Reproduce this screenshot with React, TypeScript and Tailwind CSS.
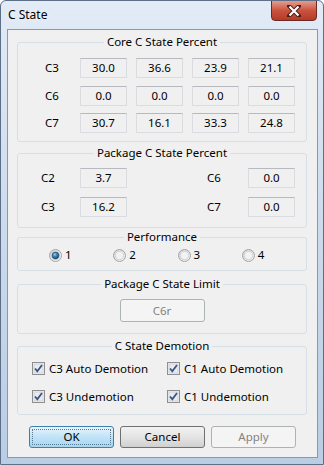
import type { ReactNode } from 'react';

const core = [
	['C3', '30.0', '36.6', '23.9', '21.1'],
	['C6', '0.0', '0.0', '0.0', '0.0'],
	['C7', '30.7', '16.1', '33.3', '24.8'],
];

const Group = ({
	title,
	className,
	children,
}: {
	title: string;
	className: string;
	children?: ReactNode;
}) => (
	<div
		className={`relative ml-[9px] w-[290px] rounded-[3px] border border-[#d5dfe5] ${className}`}
	>
		<div className="absolute -top-[9px] left-0 right-0 flex justify-center">
			<span className="bg-[#f0f0f0] px-[3px] leading-[16px]">{title}</span>
		</div>
		{children}
	</div>
);

const Field = ({ value }: { value: string }) => (
	<div className="flex h-[20px] w-[47px] items-center justify-center border border-[#dadce1] border-t-[#b6b9c0] bg-[#f0f0f0] leading-none">
		{value}
	</div>
);

const Radio = ({ checked }: { checked?: boolean }) => (
	<svg width="13" height="13" viewBox="0 0 13 13">
		<defs>
			<linearGradient id="rg" x1="0" y1="0" x2="1" y2="1">
				<stop offset="0" stopColor="#d2d4d6" />
				<stop offset="1" stopColor="#f7f7f7" />
			</linearGradient>
			<radialGradient id="dot" cx="0.4" cy="0.35" r="0.7">
				<stop offset="0" stopColor="#9bd2f5" />
				<stop offset="0.45" stopColor="#2c83c0" />
				<stop offset="1" stopColor="#12405f" />
			</radialGradient>
		</defs>
		<circle cx="6.5" cy="6.5" r="6" fill="url(#rg)" stroke="#a3a6a8" />
		<circle cx="6.5" cy="6.5" r="4.2" fill="#f2f2f2" stroke="#c9cbcd" strokeWidth="0.8" />
		{checked && <circle cx="6.5" cy="6.5" r="3.4" fill="url(#dot)" stroke="#2a4f6b" strokeWidth="0.7" />}
	</svg>
);

const Check = () => (
	<svg width="13" height="13" viewBox="0 0 13 13">
		<rect x="0.5" y="0.5" width="12" height="12" fill="#f4f4f4" stroke="#8f8f8f" />
		<rect x="2" y="2" width="9" height="9" fill="#e8ecf0" stroke="#c8ccd1" strokeWidth="0.8" />
		<path d="M3 6.5 L5.3 9.2 L10 3" fill="none" stroke="#3d5582" strokeWidth="1.8" />
	</svg>
);

const CheckItem = ({ label }: { label: string }) => (
	<div className="flex h-[13px] w-[135px] items-center gap-[4px]">
		<Check />
		<span className="leading-[13px]">{label}</span>
	</div>
);

export default function App() {
	return (
		<div className="relative h-[465px] w-[324px] overflow-hidden rounded-t-[6px] border border-[#5c6f86] bg-gradient-to-b from-[#e2ebf6] via-[#cbdaec] to-[#b9cde4] text-[11.5px] text-black font-['Noto_Sans',sans-serif]">
			{/* title bar */}
			<div className="flex h-[28px] items-center pl-[7px] text-[12px]">
				<span className="[text-shadow:0_0_6px_#fff]">C State</span>
			</div>
			<div className="absolute right-[6px] top-[-1px] flex h-[21px] w-[46px] items-center justify-center rounded-b-[4px] border border-[#6e2a22] bg-gradient-to-b from-[#e49b8e] via-[#c9533f] to-[#b43a26]">
				<svg width="14" height="12" viewBox="0 0 14 12">
					<path d="M2 1 L12 11 M12 1 L2 11" stroke="#4a1a14" strokeWidth="4" strokeLinecap="round" />
					<path d="M2.5 1.5 L11.5 10.5 M11.5 1.5 L2.5 10.5" stroke="#fff" strokeWidth="2.2" />
				</svg>
			</div>

			{/* client area */}
			<div className="ml-[6px] h-[429px] w-[311px] border border-[#8799b0] bg-[#f0f0f0]">
				<Group title="Core C State Percent" className="mt-[12px] h-[100px]">
					<div className="flex flex-col gap-[7.5px] pt-[15px]">
						{core.map((row) => (
							<div key={row[0]} className="flex items-center pl-[27px]">
								<span className="w-[35px]">{row[0]}</span>
								<div className="flex gap-[9px]">
									{row.slice(1).map((v, i) => (
										<Field key={i} value={v} />
									))}
								</div>
							</div>
						))}
					</div>
				</Group>

				<Group title="Package C State Percent" className="mt-[11px] h-[75px]">
					<div className="flex flex-col gap-[9px] pt-[14px]">
						{[
							['C2', '3.7', 'C6', '0.0'],
							['C3', '16.2', 'C7', '0.0'],
						].map((r) => (
							<div key={r[0]} className="flex items-center pl-[23px]">
								<span className="w-[39px]">{r[0]}</span>
								<Field value={r[1]} />
								<span className="ml-[80px] w-[41px]">{r[2]}</span>
								<Field value={r[3]} />
							</div>
						))}
					</div>
				</Group>

				<Group title="Performance" className="mt-[9px] h-[34px]">
					<div className="flex pl-[31px] pt-[10px]">
						{['1', '2', '3', '4'].map((n) => (
							<div key={n} className="flex w-[66px] items-center gap-[3px]">
								<Radio checked={n === '1'} />
								<span className="leading-[14px]">{n}</span>
							</div>
						))}
					</div>
				</Group>

				<Group title="Package C State Limit" className="mt-[13px] h-[50px]">
					<div className="flex justify-center pt-[14px]">
						<div className="flex h-[23px] w-[85px] items-center justify-center rounded-[3px] border border-[#adb2b5] bg-[#f4f4f4] text-[#838383]">
							C6r
						</div>
					</div>
				</Group>

				<Group title="C State Demotion" className="mt-[12px] h-[69px]">
					<div className="flex flex-col gap-[15px] pl-[14px] pt-[15px]">
						<div className="flex">
							<CheckItem label="C3 Auto Demotion" />
							<CheckItem label="C1 Auto Demotion" />
						</div>
						<div className="flex">
							<CheckItem label="C3 Undemotion" />
							<CheckItem label="C1 Undemotion" />
						</div>
					</div>
				</Group>

				<div className="ml-[21px] mt-[11px] flex gap-[6px]">
					<div className="flex h-[22px] w-[85px] items-center justify-center rounded-[3px] border border-[#3c7fb1] bg-gradient-to-b from-[#e8f5fc] via-[#bfe3f7] to-[#a6d6f1] p-[2px]">
						<div className="flex h-full w-full items-center justify-center border border-dotted border-[#5a7a94]">
							OK
						</div>
					</div>
					<div className="flex h-[22px] w-[85px] items-center justify-center rounded-[3px] border border-[#707070] bg-gradient-to-b from-[#f2f2f2] via-[#e4e4e4] to-[#d0d0d0]">
						Cancel
					</div>
					<div className="flex h-[22px] w-[85px] items-center justify-center rounded-[3px] border border-[#adb2b5] bg-[#f4f4f4] text-[#838383]">
						Apply
					</div>
				</div>
			</div>
		</div>
	);
}
